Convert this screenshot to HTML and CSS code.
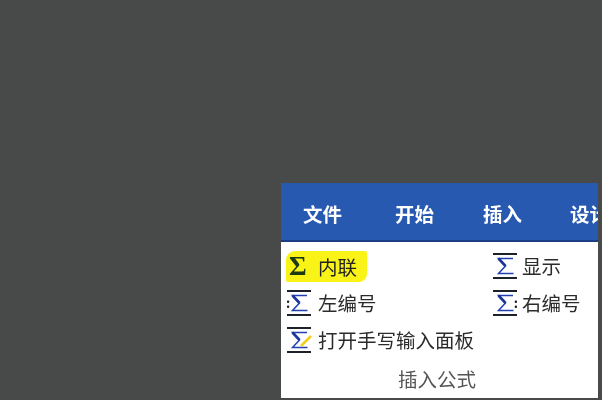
FILE: index.html
```html
<!DOCTYPE html>
<html lang="zh">
<head>
<meta charset="utf-8">
<title>插入公式</title>
<link rel="stylesheet" href="styles.css">
</head>
<body>
<svg class="defs" width="0" height="0" aria-hidden="true">
  <defs>
    <symbol id="sigma" viewBox="0 0 26 26">
      <path d="M1 1H25M1 25H25" stroke="#1d2129" stroke-width="2" fill="none"/>
      <path d="M21 5.5H6.5L13.5 13L6.5 20.5H21.5" stroke="#2140b4" stroke-width="1.5" fill="none"/>
      <path d="M6.5 5.5L13.5 13" stroke="#1c3598" stroke-width="2.6" fill="none"/>
    </symbol>
  </defs>
</svg>
<main class="panel">
  <nav class="tabs">
    <span class="tab t1">文件</span>
    <span class="tab t2">开始</span>
    <span class="tab t3">插入</span>
    <span class="tab t4">设计</span>
  </nav>
  <section class="body">
    <div class="grid">
      <div class="item inline"><span class="plain-sigma">Σ</span><span class="inline-label">内联</span></div>
      <div class="item right"><svg class="ic"><use href="#sigma"/></svg><span>显示</span></div>
      <div class="item"><span class="ic-wrap"><svg class="ic"><use href="#sigma"/></svg><i class="dots left">:</i></span><span>左编号</span></div>
      <div class="item right"><span class="ic-wrap"><svg class="ic"><use href="#sigma"/></svg><i class="dots right-dots">:</i></span><span>右编号</span></div>
      <div class="item wide"><span class="ic-wrap"><svg class="ic"><use href="#sigma"/></svg><svg class="pen" viewBox="0 0 12 12"><path d="M1 11L11 1" stroke="#f2cf1d" stroke-width="2.6"/></svg></span><span>打开手写输入面板</span></div>
    </div>
    <div class="caption">插入公式</div>
  </section>
</main>
</body>
</html>
```
FILE: styles.css
```css
html, body {
  margin: 0;
  height: 100%;
  overflow: hidden;
}
body {
  background: #484a49;
  box-sizing: border-box;
  padding: 183px 4px 2px 281px;
  font-family: "Noto Sans CJK SC", "Liberation Sans", sans-serif;
}
.defs { display: block; height: 0; }
.panel {
  width: 317px;
  height: 215px;
  background: #fff;
  display: flex;
  flex-direction: column;
  overflow: hidden;
  filter: blur(0.55px);
}
.tabs {
  height: 59px;
  flex: none;
  box-sizing: border-box;
  background: #2759b0;
  border-bottom: 2px solid #1b3d84;
  display: flex;
  align-items: center;
  padding: 4px 0 0 22px;
  color: #fff;
  font-size: 19.5px;
  font-weight: 700;
  line-height: 1;
  white-space: nowrap;
}
.tab { flex: none; width: 39px; }
.t1 { margin-right: 53px; }
.t2 { margin-right: 49px; }
.t3 { margin-right: 48px; }
.body {
  flex: 1;
  display: flex;
  flex-direction: column;
  padding: 11px 0 0 5px;
  color: #2b2b2b;
  font-size: 19.5px;
  line-height: 1;
}
.grid {
  display: grid;
  grid-template-columns: 206px 100px;
  grid-auto-rows: 37px;
}
.item {
  display: flex;
  align-items: center;
  gap: 6px;
  height: 26px;
  white-space: nowrap;
}
.item.right { gap: 4px; }
.wide { grid-column: 1 / span 2; }
.inline {
  width: 81px;
  height: 31px;
  background: #f9f318;
  border-radius: 9px 2px 8px 2px;
  color: #222;
  box-sizing: border-box;
  padding-left: 3px;
  margin-top: -2px;
  gap: 0;
}
.plain-sigma {
  font-family: "Liberation Serif", serif;
  font-weight: 700;
  font-size: 27px;
  color: #1d3a12;
  width: 29px;
}
.ic-wrap { position: relative; display: block; width: 26px; height: 26px; flex: none; }
.ic { display: block; width: 26px; height: 26px; flex: none; }
.dots {
  position: absolute;
  top: 4px;
  font-style: normal;
  font-weight: 700;
  font-size: 13px;
  line-height: 18px;
  color: #20242c;
}
.dots.left { left: 0; }
.dots.right-dots { right: 0; }
.pen { position: absolute; left: 14px; top: 8px; width: 12px; height: 12px; }
.caption {
  margin-top: 5px;
  padding-right: 10px;
  text-align: center;
  color: #555;
}
```
